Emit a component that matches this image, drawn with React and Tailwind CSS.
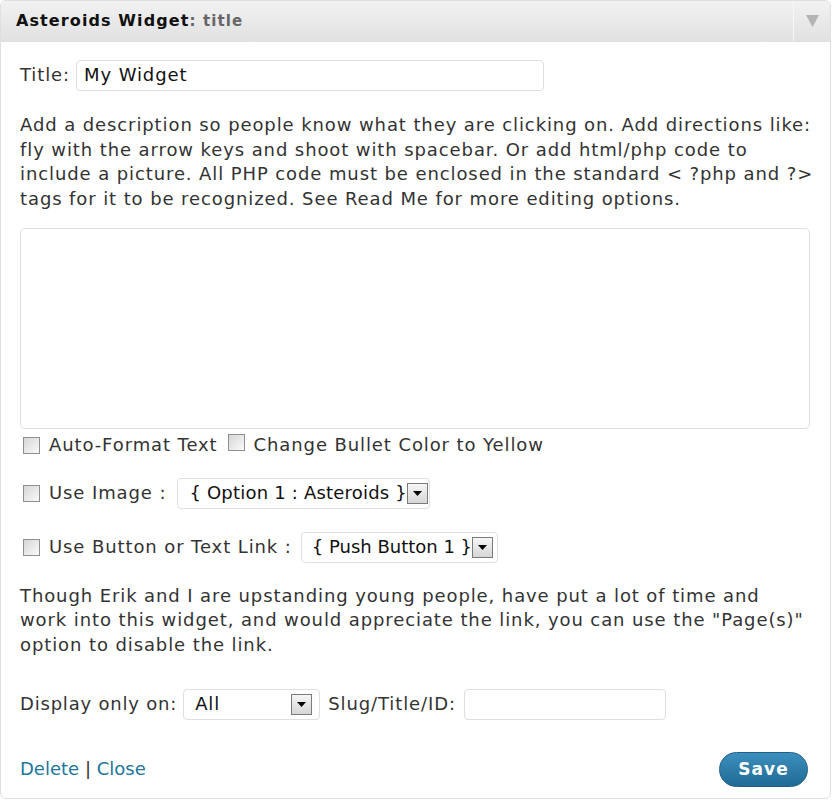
import React from "react";

const F = { fontFamily: '"DejaVu Sans", Verdana, sans-serif' };

function Check() {
  return (
    <span className="inline-block w-[17px] h-[17px] border border-[#8f8f8f] bg-gradient-to-br from-[#d6d6d6] to-[#fbfbfb] shrink-0" />
  );
}

function Arrow() {
  return (
    <span className="inline-flex items-center justify-center w-[21px] h-[21px] border border-[#7a7a7a] bg-gradient-to-b from-[#f6f6f6] to-[#d6d6d6] shrink-0">
      <svg width="9" height="5" viewBox="0 0 9 5"><path d="M0 0h9L4.5 5z" fill="#000" /></svg>
    </span>
  );
}

export default function App() {
  return (
    <div className="w-[832px] h-[800px] bg-white tracking-[0.9px]" style={F}>
      <div className="w-[831px] h-[799px] border border-[#dfdfdf] rounded-[6px] overflow-hidden flex flex-col text-[#333]">
        <div className="h-[41px] flex items-stretch bg-gradient-to-b from-[#f2f2f2] to-[#e1e1e1] border-b border-[#dfdfdf]">
          <div className="flex-1 flex items-center pl-[15px] text-[16px] tracking-[1.1px]">
            <span className="font-bold text-[#111]">Asteroids Widget</span>
            <span className="font-bold text-[#666] text-[15px]">: title</span>
          </div>
          <div className="w-[37px] border-l border-[#f8f8f8] flex items-center justify-center">
            <svg width="13" height="12" viewBox="0 0 13 12"><path d="M0 0h13L6.5 12z" fill="#b4b4b4" /></svg>
          </div>
        </div>

        <div className="flex-1 px-[19px] pt-[18px] text-[18px] leading-[24.5px] whitespace-nowrap">
          <div className="flex items-center gap-[6px]">
            <span>Title:</span>
            <span className="w-[468px] h-[31px] border border-[#dfdfdf] rounded-[4px] flex items-center pl-[7px] text-[#111]">My Widget</span>
          </div>

          <p className="mt-[22px]">
            Add a description so people know what they are clicking on. Add directions like:<br />
            fly with the arrow keys and shoot with spacebar. Or add html/php code to<br />
            include a picture. All PHP code must be enclosed in the standard &lt; ?php and ?&gt;<br />
            tags for it to be recognized. See Read Me for more editing options.
          </p>

          <div className="mt-[17px] w-[790px] h-[201px] border border-[#dfdfdf] rounded-[5px] bg-white" />

          <div className="mt-[4px] flex items-center pl-[3px]">
            <Check /><span className="ml-[9px]">Auto-Format Text</span>
            <span className="ml-[10px]"><Check /></span><span className="ml-[9px]">Change Bullet Color to Yellow</span>
          </div>

          <div className="mt-[20px] flex items-center pl-[3px]">
            <Check /><span className="ml-[9px]">Use Image :</span>
            <span className="ml-[11px] inline-flex items-center h-[31px] w-[253px] border border-[#dfdfdf] rounded-[4px] pl-[11px] pr-[2px]">
              <span className="text-[#111] tracking-[0.2px]">{"{ Option 1 : Asteroids }"}</span><Arrow />
            </span>
          </div>

          <div className="mt-[23px] flex items-center pl-[3px]">
            <Check /><span className="ml-[9px]">Use Button or Text Link :</span>
            <span className="ml-[9px] inline-flex items-center h-[31px] w-[197px] border border-[#dfdfdf] rounded-[4px] pl-[10px] pr-[2px]">
              <span className="text-[#111] tracking-[0px]">{"{ Push Button 1 }"}</span><Arrow />
            </span>
          </div>

          <p className="mt-[21px]">
            Though Erik and I are upstanding young people, have put a lot of time and<br />
            work into this widget, and would appreciate the link, you can use the "Page(s)"<br />
            option to disable the link.
          </p>

          <div className="mt-[32px] flex items-center">
            <span className="tracking-[0.8px]">Display only on:</span>
            <span className="ml-[6px] inline-flex items-center justify-between h-[31px] w-[137px] border border-[#dfdfdf] rounded-[4px] pl-[11px] pr-[7px]">
              <span className="text-[#111]">All</span><Arrow />
            </span>
            <span className="ml-[8px]">Slug/Title/ID:</span>
            <span className="ml-[8px] w-[202px] h-[31px] border border-[#dfdfdf] rounded-[4px]" />
          </div>

          <div className="mt-[32px] flex items-center justify-between pr-[3px]">
            <div className="text-[#21759b] tracking-[0px]">
              Delete <span className="text-[#333]">|</span> Close
            </div>
            <button className="w-[89px] h-[35px] rounded-full bg-gradient-to-b from-[#3c8fbd] to-[#1f6b96] border border-[#1e5f85] text-white font-bold text-[17px] tracking-[1px]">Save</button>
          </div>
        </div>
      </div>
    </div>
  );
}
